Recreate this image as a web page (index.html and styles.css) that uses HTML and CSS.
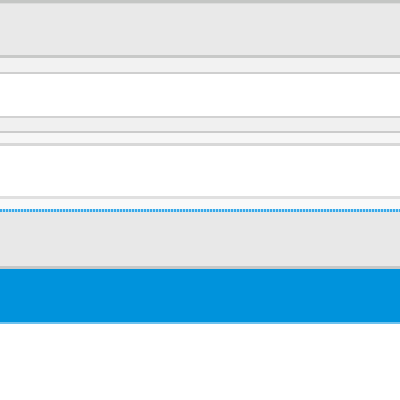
FILE: index.html
```html
<!DOCTYPE html>
<html>
<head>
  <meta charset="utf-8">
  <link rel="stylesheet" href="styles.css">
</head>
<body>
  <div class="header"></div>
  <div class="toolbar"></div>
  <div class="panel"></div>
  <div class="row row-a"></div>
  <div class="row row-b"></div>
  <div class="content"></div>
  <div class="strip"></div>
  <div class="progress"></div>
  <div class="footer"></div>
  <div class="banner"></div>
</body>
</html>
```

FILE: styles.css
```css
body {
  margin: 0;
  background: #ffffff;
  font-family: "Liberation Sans", Arial, sans-serif;
}

.header {
  height: 52px;
  background: #e9e9e9;
  border-top: 3px solid #c4c6c4;
  border-bottom: 3px solid #c8c9c8;
  box-shadow: inset 0 1px 0 #dcdcdc;
}

.toolbar {
  height: 14px;
  background: #f2f2f2;
  border-bottom: 2px solid #cfcfcf;
}

.panel {
  height: 42px;
  background: #ffffff;
  border-bottom: 2px solid #d2d2d2;
}

.row {
  background: #f0f0f0;
}

.row-a {
  height: 13px;
  border-bottom: 2px solid #cbcbcb;
}

.row-b {
  height: 10px;
  background: #f6f6f6;
  border-bottom: 3px solid #d8d8d8;
}

.content {
  height: 50px;
  background: #ffffff;
  border-bottom: 3px solid #e0e0e0;
}

.strip {
  height: 10px;
  background: #f9f9f9;
}

.progress {
  height: 3px;
  background: repeating-linear-gradient(90deg, #3aa9e8 0 2px, #b4def5 2px 3px);
}

.footer {
  height: 54px;
  background: #e8e8e8;
  border-bottom: 3px solid #c6c8c8;
}

.banner {
  height: 53px;
  background: #0093dc;
  border-bottom: 2px solid #6cc1ee;
}
```
